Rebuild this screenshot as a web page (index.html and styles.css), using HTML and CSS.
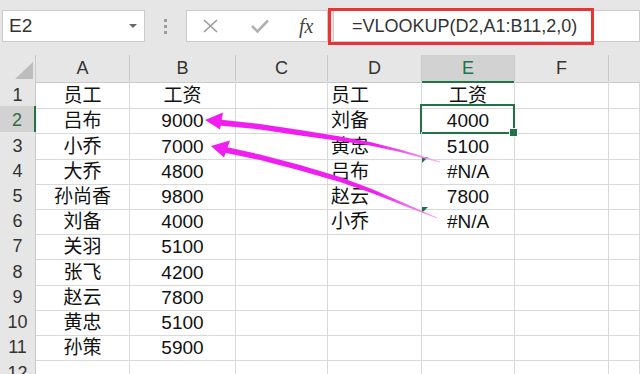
FILE: index.html
```html
<!DOCTYPE html>
<html lang="zh-CN">
<head>
  <meta charset="UTF-8">
  <title>VLOOKUP</title>
  <link rel="stylesheet" href="styles.css">
</head>
<body>
<div class="topbar">
  <div class="namebox"><span>E2</span><i class="caret"></i></div>
  <div class="grip"><i></i><i></i><i></i></div>
  <div class="fxbtns">
    <svg class="ico" width="18" height="14" viewBox="0 0 18 14"><path d="M2 1 L15 13 M15 1 L2 13" stroke="#9a9a9a" stroke-width="1.6" fill="none"/></svg>
    <svg class="ico" width="20" height="14" viewBox="0 0 20 14"><path d="M2 7 L7.5 12.5 L18 1.5" stroke="#b0b0b0" stroke-width="2.6" fill="none"/></svg>
    <span class="fx">fx</span>
  </div>
  <div class="formula">=VLOOKUP(D2,A1:B11,2,0)</div>
  <div class="redbox"></div>
</div>

<div class="sheet">
  <div class="row head">
    <div class="rh corner"><i></i></div>
    <div class="ch">A</div><div class="ch">B</div><div class="ch">C</div><div class="ch">D</div>
    <div class="ch on">E</div><div class="ch">F</div><div class="ch"></div>
  </div>
  <div class="row">
    <div class="rh">1</div>
    <div class="c ctr">员工</div><div class="c ctr">工资</div><div class="c"></div>
    <div class="c lft">员工</div><div class="c ctr">工资</div><div class="c"></div><div class="c"></div>
  </div>
  <div class="row tall">
    <div class="rh on">2</div>
    <div class="c ctr">吕布</div><div class="c ctr">9000</div><div class="c"></div>
    <div class="c lft">刘备</div><div class="c ctr sel">4000</div><div class="c"></div><div class="c"></div>
  </div>
  <div class="row">
    <div class="rh">3</div>
    <div class="c ctr">小乔</div><div class="c ctr">7000</div><div class="c"></div>
    <div class="c lft">黄忠</div><div class="c ctr">5100</div><div class="c"></div><div class="c"></div>
  </div>
  <div class="row">
    <div class="rh">4</div>
    <div class="c ctr">大乔</div><div class="c ctr">4800</div><div class="c"></div>
    <div class="c lft">吕布</div><div class="c ctr err">#N/A</div><div class="c"></div><div class="c"></div>
  </div>
  <div class="row">
    <div class="rh">5</div>
    <div class="c ctr">孙尚香</div><div class="c ctr">9800</div><div class="c"></div>
    <div class="c lft">赵云</div><div class="c ctr">7800</div><div class="c"></div><div class="c"></div>
  </div>
  <div class="row">
    <div class="rh">6</div>
    <div class="c ctr">刘备</div><div class="c ctr">4000</div><div class="c"></div>
    <div class="c lft">小乔</div><div class="c ctr err">#N/A</div><div class="c"></div><div class="c"></div>
  </div>
  <div class="row tall">
    <div class="rh">7</div>
    <div class="c ctr">关羽</div><div class="c ctr">5100</div><div class="c"></div>
    <div class="c"></div><div class="c"></div><div class="c"></div><div class="c"></div>
  </div>
  <div class="row">
    <div class="rh">8</div>
    <div class="c ctr">张飞</div><div class="c ctr">4200</div><div class="c"></div>
    <div class="c"></div><div class="c"></div><div class="c"></div><div class="c"></div>
  </div>
  <div class="row">
    <div class="rh">9</div>
    <div class="c ctr">赵云</div><div class="c ctr">7800</div><div class="c"></div>
    <div class="c"></div><div class="c"></div><div class="c"></div><div class="c"></div>
  </div>
  <div class="row">
    <div class="rh">10</div>
    <div class="c ctr">黄忠</div><div class="c ctr">5100</div><div class="c"></div>
    <div class="c"></div><div class="c"></div><div class="c"></div><div class="c"></div>
  </div>
  <div class="row tall">
    <div class="rh">11</div>
    <div class="c ctr">孙策</div><div class="c ctr">5900</div><div class="c"></div>
    <div class="c"></div><div class="c"></div><div class="c"></div><div class="c"></div>
  </div>
  <div class="row">
    <div class="rh">12</div>
    <div class="c"></div><div class="c"></div><div class="c"></div>
    <div class="c"></div><div class="c"></div><div class="c"></div><div class="c"></div>
  </div>
</div>

<!-- 手画的两个箭头 -->
<svg class="arrows" width="640" height="374" viewBox="0 0 640 374">
  <defs>
    <linearGradient id="fade" gradientUnits="userSpaceOnUse" x1="205" y1="0" x2="442" y2="0">
      <stop offset="0" stop-color="#f01ef0"/>
      <stop offset="0.72" stop-color="#f01ef0"/>
      <stop offset="1" stop-color="#f8b0f8"/>
    </linearGradient>
  </defs>
  <polygon fill="url(#fade)" points="219,119.5 260,124 300,130 340,136.5 370,142 400,149.5 440,161.5 440,162.5 400,152 370,145.5 340,141 300,135.5 260,129.5 219,125.5"/>
  <polygon fill="#f01ef0" points="205,120 223,112.5 220,129.5"/>
  <polygon fill="url(#fade)" points="224,146.5 260,154.5 300,165 340,177 373,189.5 405,203.5 437,217.5 437,218.5 405,206 373,193.5 340,182 300,170.5 260,160 224,152.5"/>
  <polygon fill="#f01ef0" points="211,146 230,140.5 224,157.5"/>
</svg>
</body>
</html>
```
FILE: styles.css
```css
* {
  margin: 0;
  padding: 0;
  box-sizing: border-box;
}

body {
  position: relative;
  width: 640px;
  height: 374px;
  overflow: hidden;
  background: #fff;
  font-family: "Liberation Sans", "Noto Sans CJK SC", sans-serif;
  color: #111;
}

/* 编辑栏 */
.topbar {
  display: flex;
  height: 55px;
  padding: 10px 0 0 2px;
  background: #e6e6e6;
}

.namebox {
  display: flex;
  align-items: center;
  justify-content: space-between;
  width: 143px;
  height: 32px;
  padding: 0 7px 0 6px;
  background: #fff;
  border: 1px solid #cbcbcb;
  font-size: 19px;
  color: #333;
}

.caret {
  width: 0;
  height: 0;
  border-left: 4px solid transparent;
  border-right: 4px solid transparent;
  border-top: 4px solid #666;
}

.grip {
  display: flex;
  flex-direction: column;
  align-items: center;
  gap: 3px;
  width: 41px;
  padding-top: 9px;
}

.grip i {
  width: 3px;
  height: 3px;
  background: #9c9c9c;
}

.fxbtns {
  display: flex;
  align-items: center;
  width: 142px;
  height: 32px;
  padding-left: 15px;
  background: #fff;
  border: 1px solid #cbcbcb;
}

.fxbtns .ico {
  margin-right: 30px;
}

.fx {
  font-family: "Liberation Serif", serif;
  font-style: italic;
  font-size: 20px;
  color: #444;
  margin-left: -1px;
}

.formula {
  flex: 1;
  height: 32px;
  margin-left: 5px;
  padding-left: 18px;
  background: #fff;
  border: 1px solid #cbcbcb;
  font-size: 18px;
  line-height: 30px;
  color: #333;
}

.redbox {
  position: absolute;
  left: 328px;
  top: 8px;
  width: 266px;
  height: 37px;
  border: 3px solid #ea3337;
}

/* 表格 */
.row {
  display: grid;
  grid-template-columns: 36px 94px 106px 92px 94px 93px 94px 1fr;
  height: 25px;
}

.row.head,
.row.tall {
  height: 26px;
}

.row > div {
  position: relative;
  border-right: 1px solid #d9d9d9;
  border-bottom: 1px solid #d9d9d9;
  white-space: nowrap;
  font-size: 19px;
  line-height: 25px;
  padding-top: 2px;
}

.row .rh,
.row .ch {
  background: #e6e6e6;
  border-color: #c9c9c9;
  color: #333;
  font-size: 18px;
  text-align: center;
}

.row .ch {
  padding-top: 1px;
}

.row .ch:last-child {
  border-right: 0;
}

.row .ch.on {
  background: #d2d2d2;
  color: #217346;
  border-bottom: 2px solid #217346;
}

.row .rh.on {
  background: #d2d2d2;
  color: #2f6b45;
  border-right: 2px solid #217346;
}

.corner i {
  position: absolute;
  right: 2px;
  bottom: 3px;
  width: 0;
  height: 0;
  border-left: 18px solid transparent;
  border-bottom: 17px solid #bdbdbd;
}

.ctr {
  text-align: center;
}

.lft {
  padding-left: 3px;
}

/* 错误提示小三角 */
.err::before {
  content: "";
  position: absolute;
  left: 0;
  top: 0;
  border-top: 6px solid #1e7145;
  border-right: 6px solid transparent;
}

/* 当前选中单元格 */
.sel::after {
  content: "";
  position: absolute;
  left: -2px;
  top: -2px;
  right: -1px;
  bottom: -1px;
  border: 2px solid #217346;
}

.sel::before {
  content: "";
  position: absolute;
  right: -4px;
  bottom: -4px;
  width: 7px;
  height: 7px;
  background: #217346;
  border: 1px solid #fff;
  z-index: 1;
}

.arrows {
  position: absolute;
  left: 0;
  top: 0;
  pointer-events: none;
}
```
